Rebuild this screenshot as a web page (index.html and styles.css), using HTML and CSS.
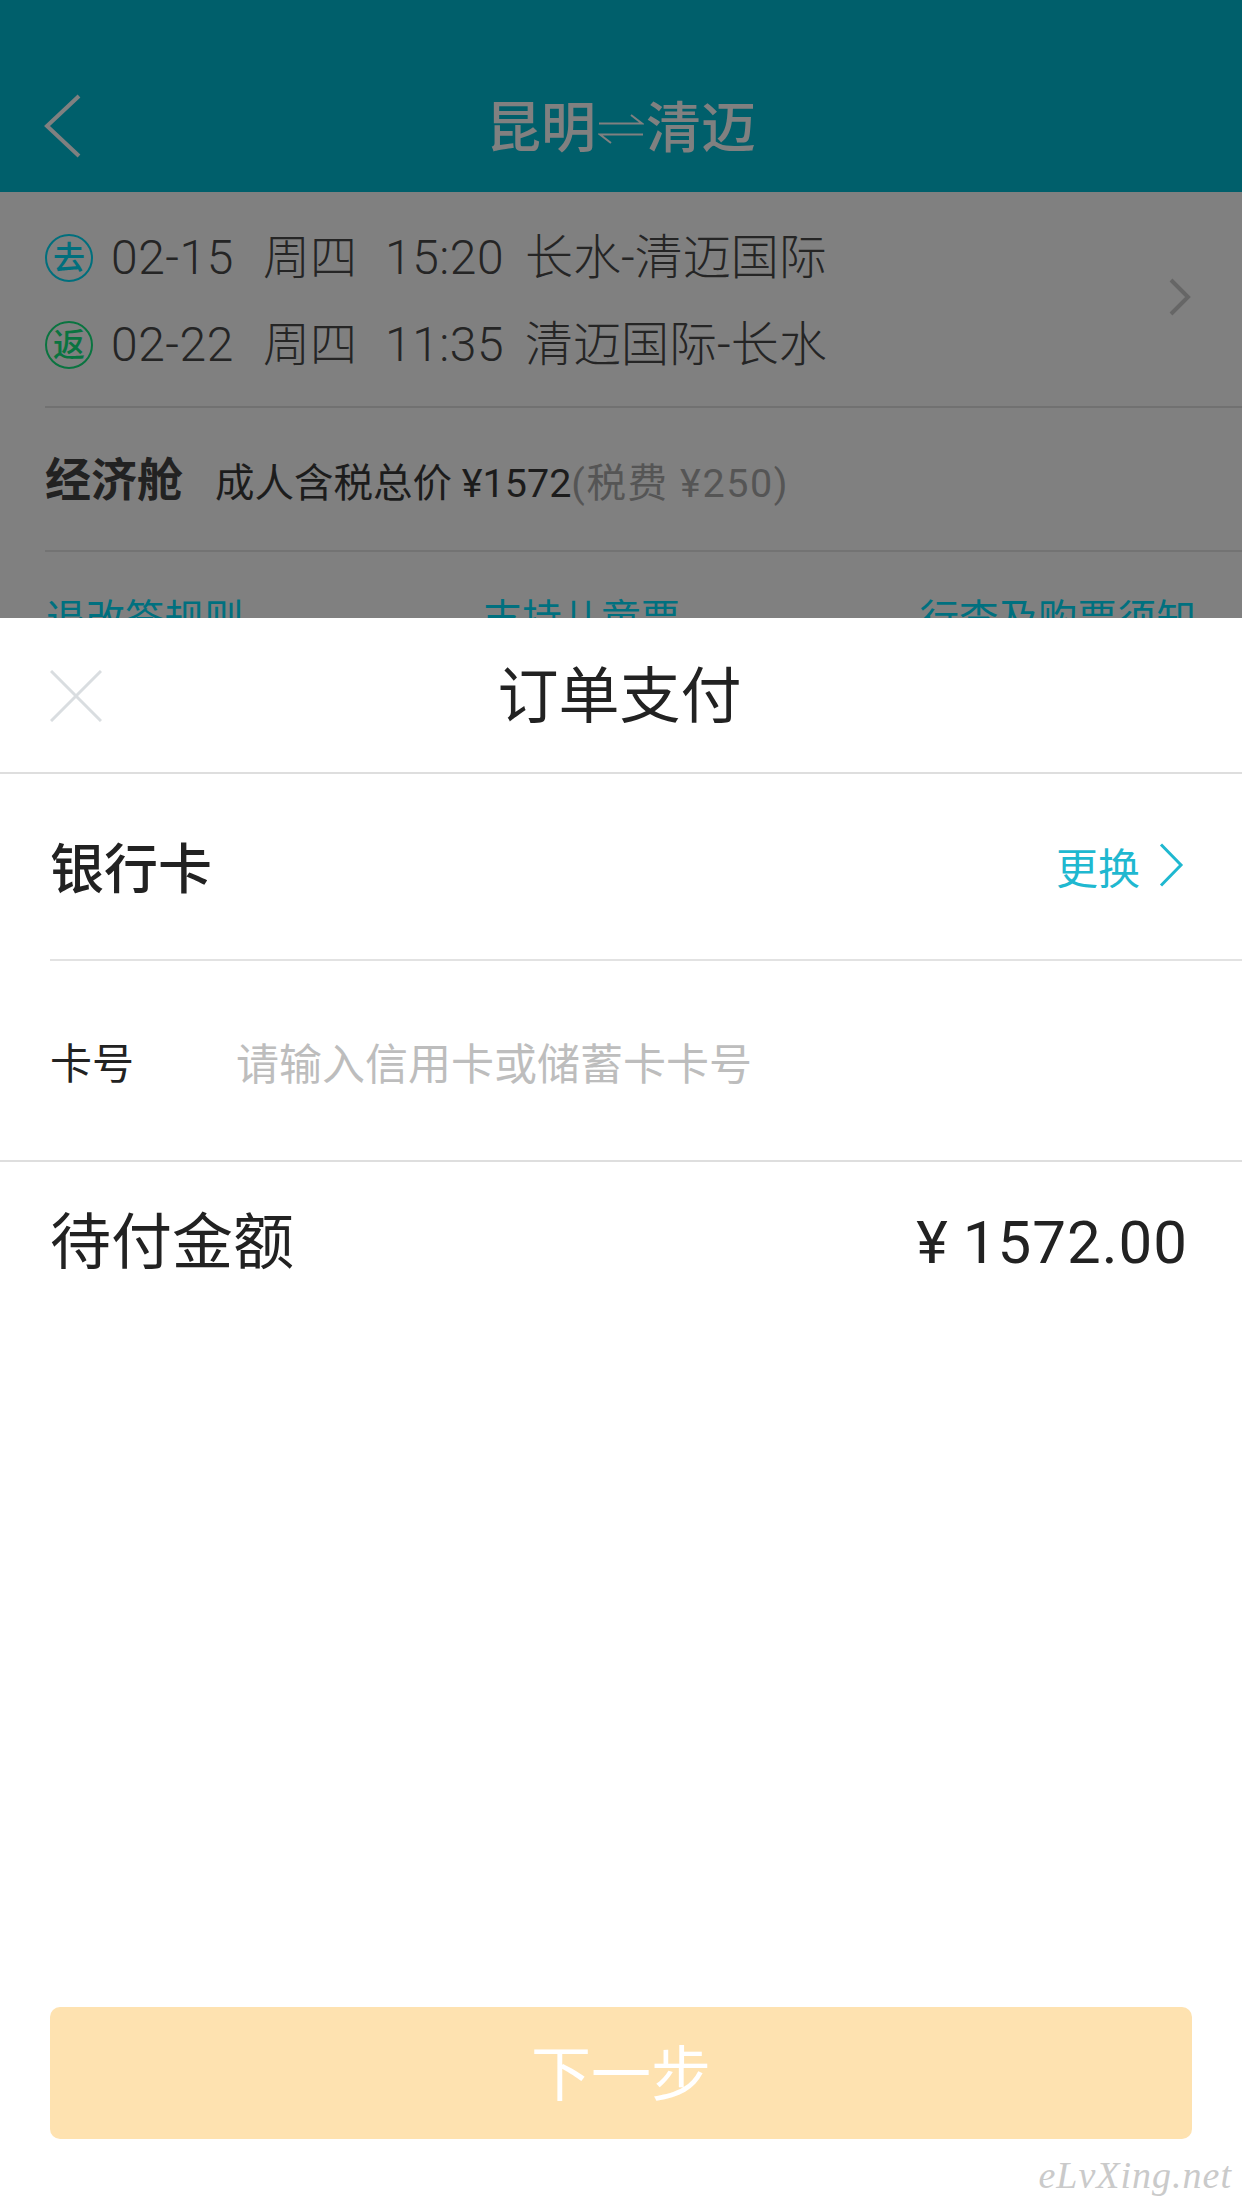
FILE: index.html
```html
<!DOCTYPE html>
<html lang="zh-CN">
<head>
<meta charset="utf-8">
<title>订单支付</title>
<link rel="stylesheet" href="styles.css">
</head>
<body>
<div class="page">
  <section class="backdrop">
    <header class="nav">
      <svg class="nav-back" width="38" height="64" viewBox="0 0 38 64"><path d="M35 2 L3 32 L35 62" fill="none" stroke="#808080" stroke-width="4"/></svg>
      <h1 class="nav-title"><span>昆明</span><svg class="swap" width="46" height="34" viewBox="0 0 46 34"><path d="M1 11.500H44L33 3M45 22.500H2L13 31" fill="none" stroke="#808080" stroke-width="2"/></svg><span>清迈</span></h1>
    </header>
    <div class="flight">
      <div class="legs">
        <div class="leg"><span class="badge badge-out">去</span><span class="date">02-15</span><span class="week">周四</span><span class="time">15:20</span><span class="route">长水-清迈国际</span></div>
        <div class="leg"><span class="badge badge-back">返</span><span class="date">02-22</span><span class="week">周四</span><span class="time">11:35</span><span class="route">清迈国际-长水</span></div>
      </div>
      <svg class="leg-arrow" width="24" height="38" viewBox="0 0 24 38"><path d="M3 2L20 19L3 36" fill="none" stroke="#666" stroke-width="4"/></svg>
    </div>
    <div class="fare"><strong class="cabin">经济舱</strong><span class="fare-label">成人含税总价 ¥1572</span><span class="fare-tax">(税费 ¥250)</span></div>
    <div class="links"><span>退改签规则</span><span>支持儿童票</span><span>行李及购票须知</span></div>
  </section>
  <section class="sheet">
    <div class="sheet-head">
      <svg class="close" width="52" height="52" viewBox="0 0 52 52"><path d="M1 1L51 51M51 1L1 51" fill="none" stroke="#d9dde0" stroke-width="3"/></svg>
      <h2 class="sheet-title">订单支付</h2>
    </div>
    <div class="method">
      <span class="method-name">银行卡</span>
      <span class="change">更换<svg width="26" height="44" viewBox="0 0 26 44"><path d="M3 1.500L23 22L3 42.500" fill="none" stroke="#1fb8d0" stroke-width="3"/></svg></span>
    </div>
    <div class="card-row"><span class="card-label">卡号</span><span class="card-input">请输入信用卡或储蓄卡卡号</span></div>
    <div class="amount"><span class="amount-label">待付金额</span><span class="amount-value"><span class="yen">¥</span>1572.00</span></div>
    <div class="spacer"></div>
    <button class="next"><span class="next-label">下一步</span></button>
    <div class="watermark">eLvXing.net</div>
  </section>
</div>
</body>
</html>
```
FILE: styles.css
```css
* { box-sizing: border-box; }
html, body { margin: 0; padding: 0; }
body { font-family: Roboto, "Noto Sans CJK SC", sans-serif; background: #fff; }
.page { width: 1242px; height: 2208px; display: flex; flex-direction: column; overflow: hidden; }

.backdrop { height: 618px; flex: none; overflow: hidden; background: #808080; color: #222; }
.nav { height: 192px; background: #005f6b; position: relative; display: flex; justify-content: center; align-items: flex-start; padding-top: 95px; }
.nav-back { position: absolute; left: 44px; top: 94px; }
.nav-title { margin: 0; display: flex; align-items: center; height: 66px; font-size: 55px; font-weight: 500; color: #808080; line-height: 66px; }
.swap { margin: 2px 2px 0; }

.flight { margin-left: 45px; height: 216px; border-bottom: 2px solid #717171; display: flex; align-items: flex-start; justify-content: space-between; padding: 42px 50px 0 0; }
.legs { display: flex; flex-direction: column; gap: 39px; }
.leg { display: flex; align-items: center; height: 48px; font-size: 47px; line-height: 48px; font-weight: 300; color: #252525; }
.badge { width: 48px; height: 48px; flex: none; border-radius: 50%; border: 2px solid; display: flex; align-items: center; justify-content: center; font-size: 32px; font-weight: 500; line-height: 1; margin-right: 18px; }
.badge-out { color: #006f7d; }
.badge-back { color: #0a7440; }
.date { width: 152px; font-size: 48px; letter-spacing: 0.5px; }
.week { width: 122px; }
.time { width: 140px; font-size: 48px; letter-spacing: 0.5px; }
.route { font-size: 48px; }
.leg-arrow { margin-top: 44px; }

.fare { margin-left: 45px; height: 144px; border-bottom: 2px solid #737373; display: flex; align-items: center; font-size: 39.5px; color: #1c1c1c; }
.cabin { font-size: 46px; font-weight: 700; color: #222; margin: 0 32px 6px 0; }
.fare-tax { color: #555; letter-spacing: 1.6px; }

.links { padding: 44px 46px 0 46px; display: flex; justify-content: space-between; font-size: 39.500px; line-height: 48px; color: #00707f; }

.sheet { flex: 1; display: flex; flex-direction: column; background: #fff; color: #222; }
.sheet-head { height: 156px; border-bottom: 2px solid #dedede; position: relative; display: flex; align-items: center; justify-content: center; padding-right: 3px; }
.close { position: absolute; left: 50px; top: 52px; }
.sheet-title { margin: 0; font-size: 61px; font-weight: 400; line-height: 80px; margin-top: 4px; }
.method { margin-left: 50px; height: 187px; border-bottom: 2px solid #e2e2e2; display: flex; align-items: center; justify-content: space-between; padding: 0 58px 3px 0; }
.method-name { font-size: 54px; font-weight: 500; }
.change { display: flex; align-items: center; gap: 18px; font-size: 42px; color: #1fb8d0; font-weight: 400; }
.card-row { height: 201px; border-bottom: 2px solid #dedede; padding-left: 50px; display: flex; align-items: center; font-size: 42px; }
.card-label { width: 186px; font-weight: 400; }
.card-input { color: #bdbdbd; font-size: 43px; font-weight: 400; }
.amount { padding: 37px 54px 0 50px; display: flex; justify-content: space-between; align-items: center; font-size: 61px; line-height: 88px; font-weight: 400; }
.amount-value { font-size: 60px; letter-spacing: 1px; margin-top: 0; }
.yen { margin-right: 14px; }
.spacer { flex: 1; }
.next { margin: 0 50px; height: 132px; flex: none; border: 0; border-radius: 10px; background: #fee2b0; color: #fff; font-family: inherit; font-size: 60px; font-weight: 400; padding: 0 0 7px; }
.watermark { height: 69px; text-align: right; padding: 0 10px 0 0; font-family: "Liberation Serif", serif; font-style: italic; font-size: 38px; line-height: 72px; color: #cacaca; letter-spacing: 1px; }
```
